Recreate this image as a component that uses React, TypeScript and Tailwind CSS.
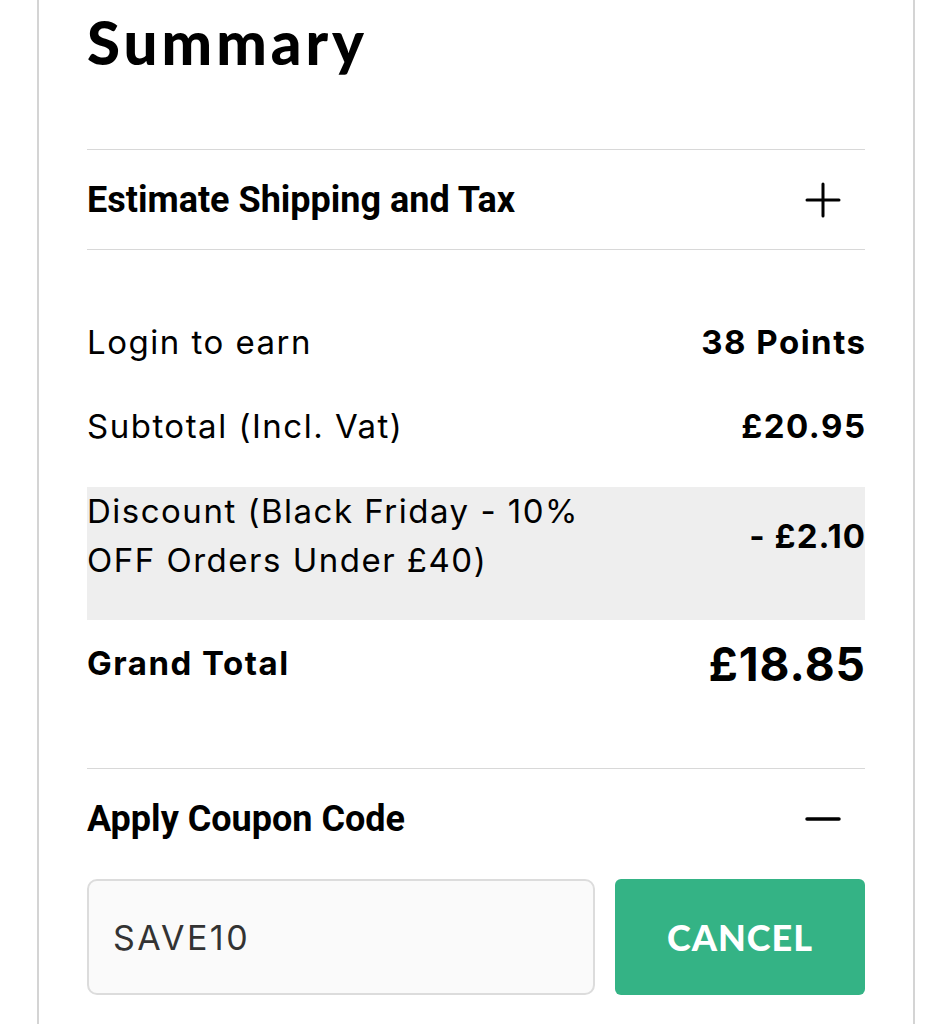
import React from 'react';

const body = { fontFamily: 'Inter, "DejaVu Sans", sans-serif' };
const head = { fontFamily: 'Roboto, "Liberation Sans", sans-serif' };
const geo = { fontFamily: 'Lato, "DejaVu Sans", sans-serif' };

const PlusIcon = () => (
  <svg width="36" height="36" viewBox="0 0 36 36" fill="none" stroke="#000" strokeWidth="3" strokeLinecap="round">
    <path d="M18 2v32M2 18h32" />
  </svg>
);

const MinusIcon = () => (
  <svg width="36" height="36" viewBox="0 0 36 36" fill="none" stroke="#000" strokeWidth="3.5" strokeLinecap="round">
    <path d="M2 18h32" />
  </svg>
);

const Row = ({ label, value }: { label: string; value: string }) => (
  <div className="flex h-[84px] items-center justify-between text-[33px] tracking-[1.5px] text-black">
    <span>{label}</span>
    <span className="-mr-[1.5px] font-bold">{value}</span>
  </div>
);

export default function App() {
  return (
    <div className="min-h-screen w-full bg-white pl-[37px]" style={body}>
      <div className="min-h-[1024px] w-[878px] border-x-2 border-[#d4d4d4] px-[48px]">
        {/* title */}
        <div className="h-[149px] pt-[6px]">
          <h1 className="text-[60px] font-black leading-[72px] tracking-[4px] text-black" style={geo}>
            Summary
          </h1>
        </div>

        <div className="flex h-[101px] items-center justify-between border-y border-[#d8d8d8]" style={head}>
          <span className="text-[36px] font-bold text-black">Estimate Shipping and Tax</span>
          <span className="mr-[24px]">
            <PlusIcon />
          </span>
        </div>

        <div className="pt-[51px]">
          <Row label="Login to earn" value="38 Points" />
          <Row label="Subtotal (Incl. Vat)" value="£20.95" />
        </div>

        <div className="mt-[18px] flex items-center justify-between bg-[#eeeeee] pb-[35px] text-[33px] leading-[49px] tracking-[1.5px] text-black">
          <span className="w-[520px]">Discount (Black Friday - 10% OFF Orders Under £40)</span>
          <span className="-mr-[1px] font-bold tracking-[1px]">- £2.10</span>
        </div>

        <div className="flex h-[88px] items-center justify-between text-black">
          <span className="text-[33px] font-bold tracking-[1.5px]">Grand Total</span>
          <span className="-mr-[1px] text-[46px] font-bold tracking-[1px]">£18.85</span>
        </div>

        <div className="mt-[60px] flex h-[100px] items-center justify-between border-t border-[#d8d8d8]" style={head}>
          <span className="text-[36px] font-bold text-black">Apply Coupon Code</span>
          <span className="mr-[24px]">
            <MinusIcon />
          </span>
        </div>

        <div className="mt-[11px] flex gap-[20px]">
          <div className="flex h-[116px] w-[508px] items-center rounded-[10px] border-2 border-[#dcdcdc] bg-[#fafafa] px-[24px] text-[34px] tracking-[2.5px] text-[#333]">
            SAVE10
          </div>
          <button
            className="flex h-[116px] flex-1 items-center justify-center rounded-[6px] bg-[#34b385] text-[36px] font-black tracking-[1px] text-white"
            style={geo}
          >
            CANCEL
          </button>
        </div>
      </div>
    </div>
  );
}
